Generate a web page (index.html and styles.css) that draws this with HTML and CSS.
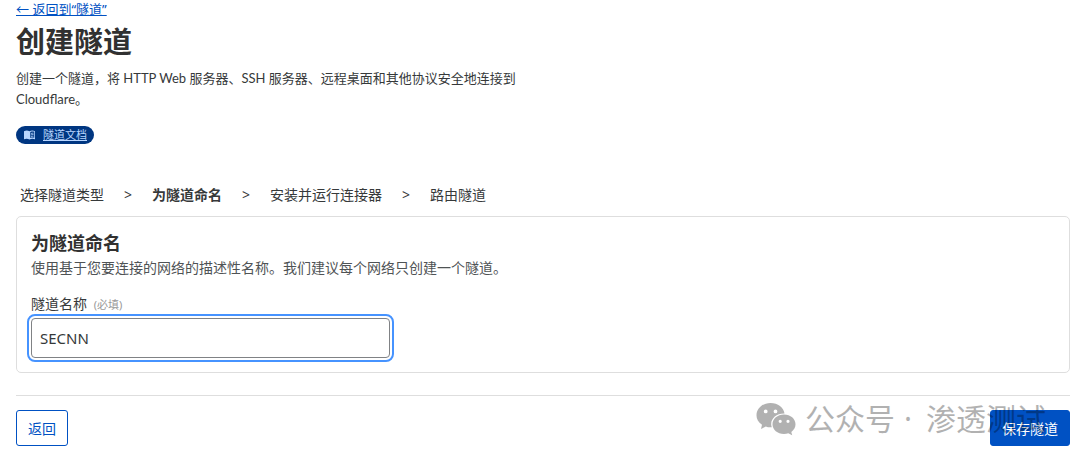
FILE: index.html
```html
<!DOCTYPE html>
<html lang="zh-CN">
<head>
    <meta charset="UTF-8">
    <meta name="viewport" content="width=device-width, initial-scale=1.0">
    <title>创建隧道</title>
    <link rel="stylesheet" href="styles.css">
</head>
<body>

    <header class="page-header">
        <a class="back-link" href="#">← 返回到“隧道”</a>
        <h1>创建隧道</h1>
        <p class="intro">创建一个隧道，将 HTTP Web 服务器、SSH 服务器、远程桌面和其他协议安全地连接到 Cloudflare。</p>
        <a class="docs-link" href="#">
            <svg class="docs-icon" viewBox="0 0 24 20" aria-hidden="true">
                <path fill="currentColor" fill-rule="evenodd" d="M1 2.5C4.500.8 8.500.8 12 2.500 15.500.8 19.500.8 23 2.500V18.500C19.500 17 15.500 17 12 19 8.500 17 4.500 17 1 18.500ZM13.500 4V16C16 15 18.800 14.800 21.500 15.500V3.500C18.800 2.800 16 3 13.500 4ZM15 6.200Q17.500 5.200 20 5.500V7Q17.500 6.700 15 7.700ZM15 9.200Q17.500 8.200 20 8.500V10Q17.500 9.700 15 10.700ZM15 12.200Q17.500 11.200 20 11.500V13Q17.500 12.700 15 13.700Z"/>
            </svg>
            <span>隧道文档</span>
        </a>
    </header>

    <!-- Etapas -->
    <nav>
        <ol class="steps">
            <li>选择隧道类型</li>
            <li class="active" aria-current="step">为隧道命名</li>
            <li>安装并运行连接器</li>
            <li>路由隧道</li>
        </ol>
    </nav>

    <form>
        <section class="panel">
            <h2>为隧道命名</h2>
            <p class="hint">使用基于您要连接的网络的描述性名称。我们建议每个网络只创建一个隧道。</p>
            <label for="tunnel-name">隧道名称 <small>(必填)</small></label>
            <input type="text" id="tunnel-name" value="SECNN" required>
        </section>

        <div class="actions">
            <button type="button" class="btn btn-outline">返回</button>
            <button type="submit" class="btn btn-primary">保存隧道</button>
            <div class="watermark">
                <svg class="wechat" viewBox="0 0 40 33" aria-hidden="true">
                    <path fill="currentColor" fill-rule="evenodd" d="M14.500 0C22 0 27.600 4.500 28.500 10.500C20.500 10.300 14.800 15.500 15.200 21.500Q15.300 23 15.800 24.300Q12.500 24.600 9.800 23.500L5 26L6 21.800C2.300 19.300.5 16 .5 12.500C.5 5.500 6.500 0 14.500 0ZM9.700 6.500a1.900 1.900 0 1 0 0 3.800 1.900 1.900 0 0 0 0-3.800ZM19.500 6.500a1.900 1.900 0 1 0 0 3.800 1.900 1.900 0 0 0 0-3.800Z"/>
                    <path fill="currentColor" fill-rule="evenodd" d="M28 11.500C34.500 11.500 39.500 15.800 39.500 21.300C39.500 24.300 38 27 35.300 29L36.200 32.300L32.300 30.300Q30.300 31 28 31C21.500 31 16.500 26.700 16.500 21.300C16.500 15.800 21.500 11.500 28 11.500ZM24.200 16.700a1.600 1.600 0 1 0 0 3.200 1.600 1.600 0 0 0 0-3.200ZM32 16.700a1.600 1.600 0 1 0 0 3.200 1.600 1.600 0 0 0 0-3.200Z"/>
                </svg>
                <span>公众号</span>
                <span class="dot">·</span>
                <span>渗透测试</span>
            </div>
        </div>
    </form>

</body>
</html>
```

FILE: styles.css
```css
body {
    font-family: "Noto Sans", "Noto Sans CJK SC", sans-serif;
    font-size: 14px;
    line-height: 20px;
    color: #36393a;
    background-color: #ffffff;
    margin: 0;
    padding: 0 10px 0 16px;
}

.page-header {
    display: flex;
    flex-direction: column;
    align-items: flex-start;
}

.back-link {
    color: #0051c3;
    font-size: 13px;
    line-height: 18px;
}

h1 {
    font-size: 29px;
    line-height: 36px;
    margin: 6px 0 8px;
    color: #313131;
}

.intro {
    font-family: Lato, "Noto Sans CJK SC", sans-serif;
    font-size: 13px;
    line-height: 21px;
    max-width: 500px;
    margin: 0 0 16px;
}

.docs-link {
    display: flex;
    align-items: center;
    gap: 7px;
    padding: 0 7px;
    border-radius: 9px;
    background-color: #003681;
    color: #b9d6ff;
    font-size: 11px;
    line-height: 18px;
}

.docs-icon {
    width: 13px;
    height: 10px;
}

.steps {
    display: flex;
    list-style: none;
    margin: 41px 0 11px;
    padding: 0 4px;
}

.steps li + li::before {
    content: ">";
    font-weight: normal;
    margin: 0 20px;
}

.steps .active {
    font-weight: bold;
}

.panel {
    border: 1px solid #dedede;
    border-radius: 5px;
    padding: 14px;
}

h2 {
    font-size: 18px;
    line-height: 24px;
    margin: 0;
    color: #313131;
}

.hint {
    margin: 3px 0 16px;
    color: #4f5355;
}

label {
    display: block;
    margin-bottom: 3px;
}

label small {
    font-size: 11px;
    margin-left: 3px;
    color: #999999;
}

input[type="text"] {
    display: block;
    width: 100%;
    max-width: 359px;
    height: 40px;
    padding: 0 8px;
    border: 1px solid #808285;
    border-radius: 4px;
    outline: 2px solid #4693ff;
    outline-offset: 2px;
    box-sizing: border-box;
    font-family: inherit;
    font-size: 15px;
    color: inherit;
}

.actions {
    position: relative;
    display: flex;
    justify-content: space-between;
    margin-top: 22px;
    padding-top: 14px;
    border-top: 1px solid #dedede;
}

.btn {
    height: 36px;
    padding: 0 11px;
    border: 1px solid #0051c3;
    border-radius: 3px;
    font-family: inherit;
    font-size: 14px;
    cursor: pointer;
}

.btn-outline {
    background-color: #ffffff;
    color: #0051c3;
}

.btn-primary {
    background-color: #0051c3;
    color: #ffffff;
}

/* Marca d'água sobre o rodapé */
.watermark {
    position: absolute;
    top: 3px;
    right: 24px;
    display: flex;
    align-items: center;
    gap: 9px;
    font-size: 30px;
    line-height: 40px;
    color: #000000;
    opacity: 0.3;
    pointer-events: none;
}

.watermark .dot {
    margin-right: 5px;
}

.wechat {
    width: 40px;
    height: 33px;
}
```
